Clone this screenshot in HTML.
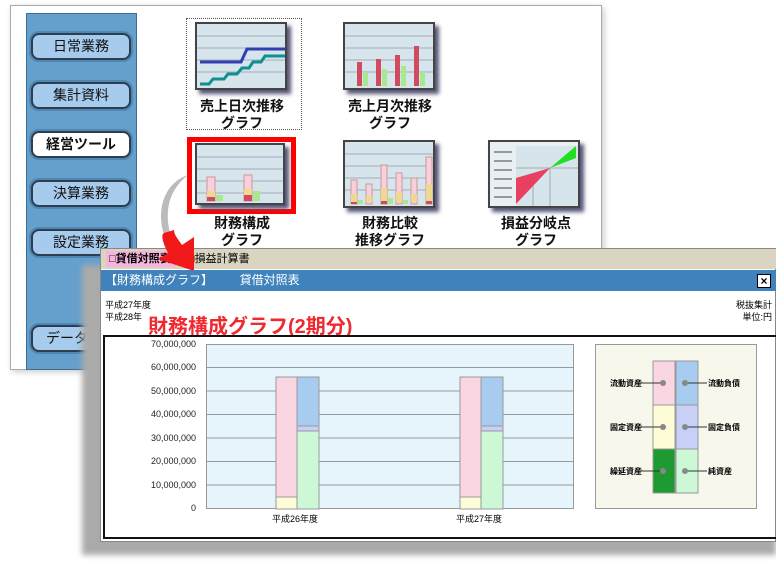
<!DOCTYPE html><html><head><meta charset="utf-8"><style>
*{margin:0;padding:0;box-sizing:border-box}
body{width:776px;height:574px;background:#fff;position:relative;overflow:hidden;font-family:"Liberation Sans","Noto Sans CJK JP",sans-serif}
.a{position:absolute}
.btn{position:absolute;left:31px;width:100px;height:27px;border:2px solid #2c3e50;border-radius:8px;background:#a6cbec;font-size:14px;text-align:center;line-height:23px;color:#111;box-shadow:0 0 0 2px #4f86b4}
.lab{position:absolute;font-size:14px;text-align:center;line-height:17px;color:#111;font-weight:bold;width:110px}
.ic{position:absolute;width:92px;height:68px;background:#d6e4ec;border:2px solid #444;box-shadow:4px 4px 4px #557}
.y{position:absolute;right:580px;font-size:9px;color:#222}
.lg{position:absolute;font-size:8px;font-weight:bold}
</style></head><body>
<div class="a" style="left:10px;top:5px;width:592px;height:365px;border:1px solid #aaa;background:#fff;box-shadow:2px 2px 6px #ccc"></div>
<div class="a" style="left:26px;top:13px;width:111px;height:357px;background:#65a0cc;border:1px solid #3d6e95"></div>
<div class="btn" style="top:33px">日常業務</div>
<div class="btn" style="top:82px">集計資料</div>
<div class="btn" style="top:131px;background:#fff;font-weight:bold">経営ツール</div>
<div class="btn" style="top:180px">決算業務</div>
<div class="btn" style="top:229px">設定業務</div>
<div class="btn" style="top:325px">データ管理</div>
<div class="a" style="left:186px;top:18px;width:116px;height:112px;border:1px dotted #555"></div>
<div class="ic" style="left:195px;top:22px"><svg width="88" height="64"><g stroke="#aab" stroke-width="1"><line x1="0" y1="12" x2="88" y2="12"/><line x1="0" y1="24" x2="88" y2="24"/><line x1="0" y1="36" x2="88" y2="36"/><line x1="0" y1="48" x2="88" y2="48"/></g><polyline points="3,38 44,38 50,25 88,25" fill="none" stroke="#3040b0" stroke-width="3"/><polyline points="3,60 12,60 16,55 27,55 31,50 40,50 45,44 52,44 56,38 64,38 68,32 88,32" fill="none" stroke="#109090" stroke-width="3"/></svg></div>
<div class="lab" style="left:187px;top:98px">売上日次推移<br>グラフ</div>
<div class="ic" style="left:343px;top:22px"><svg width="88" height="64"><g stroke="#aab"><line x1="0" y1="12" x2="88" y2="12"/><line x1="0" y1="24" x2="88" y2="24"/><line x1="0" y1="36" x2="88" y2="36"/><line x1="0" y1="48" x2="88" y2="48"/></g><g fill="#d04a60"><rect x="12" y="38" width="5" height="24"/><rect x="31" y="35" width="5" height="27"/><rect x="50" y="31" width="5" height="31"/><rect x="69" y="22" width="5" height="40"/></g><g fill="#a8e890"><rect x="18" y="48" width="5" height="14"/><rect x="37" y="45" width="5" height="17"/><rect x="56" y="42" width="5" height="20"/><rect x="75" y="48" width="5" height="14"/></g></svg></div>
<div class="lab" style="left:335px;top:98px">売上月次推移<br>グラフ</div>
<div class="a" style="left:187px;top:137px;width:109px;height:77px;border:5px solid #f00"></div>
<div class="ic" style="left:195px;top:143px;width:90px;height:62px"><svg width="86" height="58"><g stroke="#aab"><line x1="0" y1="12" x2="86" y2="12"/><line x1="0" y1="24" x2="86" y2="24"/><line x1="0" y1="36" x2="86" y2="36"/><line x1="0" y1="48" x2="86" y2="48"/></g><rect x="10" y="32" width="8" height="24" fill="#f8d0dc" stroke="#c99"/><rect x="10" y="46" width="8" height="6" fill="#f0d890"/><rect x="10" y="52" width="8" height="4" fill="#d04a60"/><rect x="19" y="50" width="7" height="6" fill="#a8e890"/><rect x="47" y="30" width="8" height="26" fill="#f8d0dc" stroke="#c99"/><rect x="47" y="44" width="8" height="6" fill="#f0d890"/><rect x="47" y="50" width="8" height="6" fill="#d04a60"/><rect x="56" y="46" width="7" height="10" fill="#a8e890"/></svg></div>
<div class="lab" style="left:187px;top:215px">財務構成<br>グラフ</div>
<div class="ic" style="left:343px;top:140px"><svg width="88" height="64"><g stroke="#aab"><line x1="0" y1="12" x2="88" y2="12"/><line x1="0" y1="24" x2="88" y2="24"/><line x1="0" y1="36" x2="88" y2="36"/><line x1="0" y1="48" x2="88" y2="48"/></g><g fill="#f8d0dc" stroke="#c99"><rect x="6" y="38" width="6" height="24"/><rect x="21" y="42" width="6" height="20"/><rect x="36" y="23" width="6" height="39"/><rect x="51" y="31" width="6" height="31"/><rect x="66" y="36" width="6" height="26"/><rect x="81" y="15" width="6" height="47"/></g><g fill="#f0d890"><rect x="6" y="52" width="6" height="8"/><rect x="21" y="54" width="6" height="6"/><rect x="36" y="46" width="6" height="14"/><rect x="51" y="50" width="6" height="10"/><rect x="66" y="52" width="6" height="8"/><rect x="81" y="42" width="6" height="18"/></g><g fill="#d04a60"><rect x="6" y="60" width="6" height="2"/><rect x="36" y="59" width="6" height="3"/><rect x="81" y="59" width="6" height="3"/></g><g fill="#a8e890"><rect x="13" y="58" width="5" height="4"/><rect x="43" y="56" width="5" height="6"/><rect x="58" y="58" width="5" height="4"/></g></svg></div>
<div class="lab" style="left:335px;top:215px">財務比較<br>推移グラフ</div>
<div class="ic" style="left:488px;top:140px;background:#e8f0f4"><svg width="88" height="64"><g stroke="#999" stroke-width="2"><line x1="4" y1="10" x2="22" y2="10"/><line x1="4" y1="19" x2="22" y2="19"/><line x1="4" y1="28" x2="22" y2="28"/><line x1="4" y1="37" x2="22" y2="37"/><line x1="4" y1="46" x2="22" y2="46"/><line x1="4" y1="55" x2="22" y2="55"/></g><rect x="26" y="4" width="62" height="60" fill="#d6e4ec"/><g stroke="#aaa"><line x1="26" y1="26" x2="88" y2="26"/><line x1="60" y1="26" x2="60" y2="64"/><line x1="43" y1="40" x2="43" y2="64"/></g><polygon points="26,62 60,26 26,36" fill="#e84060"/><polygon points="60,26 86,4 86,16" fill="#20e020"/></svg></div>
<div class="lab" style="left:481px;top:215px">損益分岐点<br>グラフ</div>
<div class="a" style="left:82px;top:265px;width:694px;height:290px;background:#aaa;filter:blur(3px)"></div>
<div class="a" style="left:100px;top:248px;width:676px;height:294px;background:#fff;border:1px solid #888"></div>
<div class="a" style="left:101px;top:249px;width:675px;height:20px;background:#d9d5c1"></div>
<div class="a" style="left:106px;top:251px;width:70px;height:16px;background:#f4b4dc;font-size:11px;font-weight:bold;line-height:16px;padding-left:3px">□貸借対照表</div>
<div class="a" style="left:188px;top:251px;font-size:11px;line-height:16px">□損益計算書</div>
<svg class="a" style="left:150px;top:175px" width="70" height="100"><path d="M38,0 C14,8 6,35 14,60 L20,58 C14,34 20,14 38,0Z" fill="#bbb"/><path d="M14,58 C10,60 14,70 18,78 L8,84 L44,96 L44,62 L32,70 C28,64 24,60 24,55Z" fill="#f01818"/></svg>
<div class="a" style="left:101px;top:270px;width:675px;height:21px;background:#3f82bc;color:#fff;font-size:12px;line-height:21px;padding-left:4px">【財務構成グラフ】&nbsp;&nbsp;&nbsp;&nbsp;&nbsp;&nbsp;&nbsp;&nbsp;貸借対照表</div>
<div class="a" style="left:757px;top:274px;width:14px;height:14px;background:#fff;border:1px solid #000;font-size:12px;line-height:12px;text-align:center;font-weight:bold">×</div>
<div class="a" style="left:105px;top:299px;font-size:9px;line-height:12px">平成27年度<br>平成28年</div>
<div class="a" style="right:4px;top:299px;font-size:9px;line-height:12px;text-align:right">税抜集計<br>単位:円</div>
<div class="a" style="left:148px;top:310px;font-size:20px;font-weight:bold;color:#f02830;text-shadow:0 0 2px #fff,0 0 2px #fff">財務構成グラフ(2期分)</div>
<div class="a" style="left:103px;top:335px;width:673px;height:204px;border:2px solid #111;border-right:none"></div>
<div class="a" style="left:206px;top:344px;width:368px;height:165px;background:#e6f5fb;border:1px solid #999"></div>
<svg class="a" style="left:206px;top:344px" width="368" height="166"><g stroke="#999"><line x1="0" y1="23.5" x2="368" y2="23.5"/><line x1="0" y1="47" x2="368" y2="47"/><line x1="0" y1="70.5" x2="368" y2="70.5"/><line x1="0" y1="94" x2="368" y2="94"/><line x1="0" y1="117.5" x2="368" y2="117.5"/><line x1="0" y1="141" x2="368" y2="141"/></g>
<g stroke="#999"><rect x="70" y="33" width="21" height="120" fill="#fad6e2"/><rect x="70" y="153" width="21" height="12" fill="#fefcd6"/><rect x="91" y="33" width="22" height="49" fill="#a7ccf0"/><rect x="91" y="82" width="22" height="5" fill="#c8d0f8"/><rect x="91" y="87" width="22" height="78" fill="#ccf8d6"/>
<rect x="254" y="33" width="21" height="120" fill="#fad6e2"/><rect x="254" y="153" width="21" height="12" fill="#fefcd6"/><rect x="275" y="33" width="22" height="49" fill="#a7ccf0"/><rect x="275" y="82" width="22" height="5" fill="#c8d0f8"/><rect x="275" y="87" width="22" height="78" fill="#ccf8d6"/></g></svg>
<div class="y" style="top:339px">70,000,000</div><div class="y" style="top:362px">60,000,000</div><div class="y" style="top:386px">50,000,000</div><div class="y" style="top:409px">40,000,000</div><div class="y" style="top:433px">30,000,000</div><div class="y" style="top:456px">20,000,000</div><div class="y" style="top:480px">10,000,000</div><div class="y" style="top:503px">0</div>
<div class="a" style="left:272px;top:512px;font-size:9px">平成26年度</div>
<div class="a" style="left:456px;top:512px;font-size:9px">平成27年度</div>
<div class="a" style="left:595px;top:344px;width:162px;height:165px;background:#f7f7ec;border:1px solid #999"></div>
<svg class="a" style="left:595px;top:344px" width="162" height="165"><g stroke="#999"><rect x="58" y="17" width="22" height="44" fill="#fad6e2"/><rect x="81" y="17" width="22" height="44" fill="#a7ccf0"/><rect x="58" y="61" width="22" height="44" fill="#fefcd6"/><rect x="81" y="61" width="22" height="44" fill="#c8d0f8"/><rect x="58" y="105" width="22" height="44" fill="#1e9a32"/><rect x="81" y="105" width="22" height="44" fill="#ccf8d6"/></g><g stroke="#333"><line x1="46" y1="39" x2="68" y2="39"/><line x1="90" y1="39" x2="112" y2="39"/><line x1="46" y1="83" x2="68" y2="83"/><line x1="90" y1="83" x2="112" y2="83"/><line x1="46" y1="127" x2="68" y2="127"/><line x1="90" y1="127" x2="112" y2="127"/></g><g fill="#888"><circle cx="68" cy="39" r="3"/><circle cx="90" cy="39" r="3"/><circle cx="68" cy="83" r="3"/><circle cx="90" cy="83" r="3"/><circle cx="68" cy="127" r="3"/><circle cx="90" cy="127" r="3"/></g></svg>
<div class="lg" style="left:610px;top:378px">流動資産</div><div class="lg" style="left:708px;top:378px">流動負債</div>
<div class="lg" style="left:610px;top:422px">固定資産</div><div class="lg" style="left:708px;top:422px">固定負債</div>
<div class="lg" style="left:610px;top:466px">繰延資産</div><div class="lg" style="left:708px;top:466px">純資産</div>
</body></html>
